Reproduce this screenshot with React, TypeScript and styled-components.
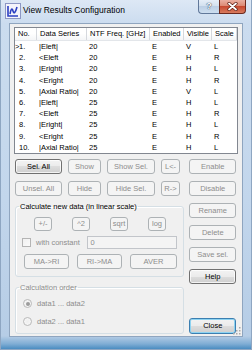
import React from "react";
import styled, { createGlobalStyle, css } from "styled-components";

const GlobalStyle = createGlobalStyle`
  html, body { margin: 0; padding: 0; background: #ffffff; }
  body { font-family: "Liberation Sans", Arial, sans-serif; }
  * { box-sizing: border-box; }
`;

const FONT = `"Liberation Sans", Arial, sans-serif`;

const Window = styled.div`
  width: 252px;
  height: 350px;
  display: flex;
  flex-direction: column;
  padding: 0 8px 12px 8px;
  border: 1px solid #8ea6c2;
  border-top: none;
  background: linear-gradient(
    180deg,
    #dde8f5 0px,
    #cbdcef 24px,
    #c2d6ec 200px,
    #b6cde6 336px,
    #7fadd4 344px,
    #3f86bd 350px
  );
  overflow: hidden;
`;

const TitleBar = styled.div`
  height: 24px;
  margin: 0 -8px;
  padding: 0 5px 0 4px;
  display: flex;
  align-items: flex-start;
`;

const AppIcon = styled.svg`
  width: 16px;
  height: 16px;
  margin-top: 3px;
  flex: none;
`;

const Title = styled.span`
  margin: 4px 0 0 2px;
  font: 8.5px/12px ${FONT};
  color: #000;
`;

const CaptionButtons = styled.div`
  margin-left: auto;
  display: flex;
`;

const HelpCap = styled.div`
  width: 21px;
  height: 14px;
  display: flex;
  align-items: center;
  justify-content: center;
  border: 1px solid #61789a;
  border-top: none;
  border-right: none;
  border-radius: 0 0 0 4px;
  background: linear-gradient(180deg, #e6eef8 0%, #d3e0ef 45%, #bccfe5 50%, #cddef0 100%);
  font: bold 9px/1 ${FONT};
  color: #fff;
  text-shadow: 0 0 1px #2b3d55, 0 0 1px #2b3d55;
`;

const CloseCap = styled.div`
  width: 27px;
  height: 14px;
  display: flex;
  align-items: center;
  justify-content: center;
  border: 1px solid #6d2a1f;
  border-top: none;
  border-radius: 0 0 4px 0;
  background: linear-gradient(180deg, #eab0a2 0%, #dc8a74 45%, #c84a31 50%, #d87b5e 100%);
`;

const Client = styled.div`
  flex: 1;
  position: relative;
  display: flex;
  flex-direction: column;
  background: #f0f0f0;
  border: 1px solid #8fa5bf;
  padding: 3px 4px 2px 4px;
  font: 7.5px/1 ${FONT};
`;

const COLS = "22px 50px 63px 34px 28px 1fr";

const ListView = styled.div`
  border: 1px solid #828790;
  background: #ffffff;
  height: 127px;
  overflow: hidden;
`;

const HeaderRow = styled.div`
  display: grid;
  grid-template-columns: ${COLS};
  height: 13px;
  background: linear-gradient(180deg, #ffffff 0%, #ffffff 45%, #f4f5f7 100%);
  border-bottom: 1px solid #e3e6ea;
`;

const HeaderCell = styled.div`
  padding-left: 3px;
  border-right: 1px solid #d5d8dd;
  line-height: 12px;
  color: #000;
  white-space: nowrap;
  overflow: hidden;
`;

const DataRow = styled.div`
  display: grid;
  grid-template-columns: ${COLS};
  height: 11.2px;
  line-height: 11.2px;
  color: #000;
`;

const DataCell = styled.div`
  padding-left: 2px;
  white-space: nowrap;
  overflow: hidden;
`;

const NoCell = styled.div`
  white-space: nowrap;
`;

const Marker = styled.span`
  display: inline-block;
  width: 4px;
`;

const Bottom = styled.div`
  flex: 1;
  display: flex;
  gap: 5px;
  margin-top: 5px;
  padding: 0 2px 0 1px;
`;

const LeftPane = styled.div`
  width: 171px;
  display: flex;
  flex-direction: column;
`;

const RightPane = styled.div`
  width: 47px;
  display: flex;
  flex-direction: column;
  gap: 7px;
`;

const ButtonGrid = styled.div`
  display: grid;
  grid-template-columns: 47px 33px 48px 19px;
  grid-auto-rows: 15px;
  column-gap: 6px;
  row-gap: 7px;
`;

const Btn = styled.button<{ $w?: number; $h?: number; $focus?: boolean }>`
  width: ${(p) => (p.$w ? `${p.$w}px` : "100%")};
  height: ${(p) => p.$h ?? 15}px;
  flex: none;
  padding: 0;
  margin: 0;
  font: 7.5px/1 ${FONT};
  color: #000;
  border: 1px solid #707070;
  border-radius: 3px;
  background: linear-gradient(180deg, #f3f3f3 0%, #ebebeb 50%, #dddddd 50%, #cfcfcf 100%);
  box-shadow: inset 0 0 0 1px rgba(255, 255, 255, 0.75);
  ${(p) =>
    p.$focus &&
    css`
      border-color: #3c7fb1;
      box-shadow: inset 0 0 0 1px #8ed3f1;
    `}
  &:disabled {
    color: #8d8d8d;
    border-color: #adb2b5;
    background: #f4f4f4;
    box-shadow: none;
  }
`;

// default button, pushed to the bottom of the right column
const CloseBtn = styled(Btn)`
  margin-top: auto;
`;

const GroupBox = styled.fieldset`
  margin: 6px 0 0 0;
  padding: 0 0 7px 0;
  min-width: 0;
  border: 1px solid #d5dfe5;
  border-radius: 3px;
  box-shadow: inset 1px 1px 0 #ffffff;
`;

const Legend = styled.legend<{ $disabled?: boolean }>`
  margin-left: 3px;
  padding: 0 1px;
  font: 7.5px/9px ${FONT};
  color: ${(p) => (p.$disabled ? "#8d8d8d" : "#000")};
`;

const OpRow = styled.div`
  display: flex;
  gap: 20px;
  margin: 6px 0 0 18px;
`;

const ConstRow = styled.div`
  display: flex;
  align-items: center;
  height: 13px;
  margin: 5px 6px 0 6px;
`;

const CheckBox = styled.span`
  width: 9px;
  height: 9px;
  border: 1px solid #b4b4b4;
  background: linear-gradient(135deg, #f0f0f0, #fafafa);
`;

const Label = styled.span<{ $disabled?: boolean }>`
  margin-left: 5px;
  color: ${(p) => (p.$disabled ? "#8d8d8d" : "#000")};
  white-space: nowrap;
`;

const TextBox = styled.input`
  margin-left: auto;
  width: 90px;
  height: 13px;
  padding: 0 0 0 2px;
  border: 1px solid #c2c5ca;
  background: #f4f4f4;
  font: 7.5px/11px ${FONT};
  color: #8d8d8d;
`;

const ConvRow = styled.div`
  display: flex;
  gap: 8px;
  margin: 5px 0 0 8px;
`;

const RadioRow = styled.div<{ $gap: number }>`
  display: flex;
  align-items: center;
  height: 9px;
  margin: ${(p) => p.$gap}px 0 0 7px;
`;

const Radio = styled.span<{ $checked?: boolean }>`
  width: 9px;
  height: 9px;
  border-radius: 50%;
  border: 1px solid #b9b9b9;
  background: radial-gradient(circle, #eeeeee 0%, #f8f8f8 100%);
  display: flex;
  align-items: center;
  justify-content: center;
  &::after {
    content: "";
    width: 4px;
    height: 4px;
    border-radius: 50%;
    background: ${(p) => (p.$checked ? "#9c9c9c" : "transparent")};
  }
`;

const SizeGrip = styled.svg`
  position: absolute;
  right: 1px;
  bottom: 1px;
  width: 9px;
  height: 9px;
`;

type Row = [string, string, string, string, string];

const rows: Row[] = [
  ["|Eleft|", "20", "E", "V", "L"],
  ["<Eleft", "20", "E", "H", "R"],
  ["|Eright|", "20", "E", "H", "L"],
  ["<Eright", "20", "E", "H", "R"],
  ["|Axial Ratio|", "20", "E", "V", "L"],
  ["|Eleft|", "25", "E", "H", "L"],
  ["<Eleft", "25", "E", "H", "R"],
  ["|Eright|", "25", "E", "H", "L"],
  ["<Eright", "25", "E", "H", "R"],
  ["|Axial Ratio|", "25", "E", "H", "L"],
];

const headers = ["No.", "Data Series", "NTF Freq. [GHz]", "Enabled", "Visible", "Scale"];

export default function App() {
  return (
    <>
      <GlobalStyle />
      <Window>
        <TitleBar>
          <AppIcon viewBox="0 0 16 16">
            <rect x="0.5" y="0.5" width="15" height="15" fill="#f4f4fb" stroke="#8d97c4" />
            <path d="M3 3 V13 H13" fill="none" stroke="#2b3fc2" strokeWidth="1.6" />
            <path d="M5 11 Q6.5 3 8 8 T12 4" fill="none" stroke="#2b3fc2" strokeWidth="1.6" />
          </AppIcon>
          <Title>View Results Configuration</Title>
          <CaptionButtons>
            <HelpCap>?</HelpCap>
            <CloseCap>
              <svg width="11" height="9" viewBox="0 0 11 9">
                <path d="M2 1.5 L9 7.5 M9 1.5 L2 7.5" stroke="#5a1a10" strokeWidth="3.2" strokeLinecap="round" />
                <path d="M2 1.5 L9 7.5 M9 1.5 L2 7.5" stroke="#ffffff" strokeWidth="1.8" strokeLinecap="round" />
              </svg>
            </CloseCap>
          </CaptionButtons>
        </TitleBar>

        <Client>
          <ListView>
            <HeaderRow>
              {headers.map((h) => (
                <HeaderCell key={h}>{h}</HeaderCell>
              ))}
            </HeaderRow>
            {rows.map((r, i) => (
              <DataRow key={i}>
                <NoCell>
                  <Marker>{i === 0 ? ">" : ""}</Marker>
                  {i + 1}.
                </NoCell>
                {r.map((c, j) => (
                  <DataCell key={j}>{c}</DataCell>
                ))}
              </DataRow>
            ))}
          </ListView>

          <Bottom>
            <LeftPane>
              <ButtonGrid>
                <Btn>Sel. All</Btn>
                <Btn disabled>Show</Btn>
                <Btn disabled>Show Sel.</Btn>
                <Btn disabled>L&lt;-</Btn>
                <Btn disabled>Unsel. All</Btn>
                <Btn disabled>Hide</Btn>
                <Btn disabled>Hide Sel.</Btn>
                <Btn disabled>R-&gt;</Btn>
              </ButtonGrid>

              <GroupBox>
                <Legend>Calculate new data (in linear scale)</Legend>
                <OpRow>
                  <Btn disabled $w={18} $h={14}>+/-</Btn>
                  <Btn disabled $w={18} $h={14}>^2</Btn>
                  <Btn disabled $w={18} $h={14}>sqrt</Btn>
                  <Btn disabled $w={18} $h={14}>log</Btn>
                </OpRow>
                <ConstRow>
                  <CheckBox />
                  <Label $disabled>with constant</Label>
                  <TextBox disabled value="0" readOnly />
                </ConstRow>
                <ConvRow>
                  <Btn disabled $w={45}>MA-&gt;RI</Btn>
                  <Btn disabled $w={45}>RI-&gt;MA</Btn>
                  <Btn disabled $w={47}>AVER</Btn>
                </ConvRow>
              </GroupBox>

              <GroupBox>
                <Legend $disabled>Calculation order</Legend>
                <RadioRow $gap={7}>
                  <Radio $checked />
                  <Label $disabled>data1 ... data2</Label>
                </RadioRow>
                <RadioRow $gap={9}>
                  <Radio />
                  <Label $disabled>data2 ... data1</Label>
                </RadioRow>
              </GroupBox>
            </LeftPane>

            <RightPane>
              <Btn disabled>Enable</Btn>
              <Btn disabled>Disable</Btn>
              <Btn disabled>Rename</Btn>
              <Btn disabled>Delete</Btn>
              <Btn disabled>Save sel.</Btn>
              <Btn>Help</Btn>
              <CloseBtn $focus $h={16}>Close</CloseBtn>
            </RightPane>
          </Bottom>

          <SizeGrip viewBox="0 0 9 9">
            {[
              [7, 1],
              [7, 4],
              [4, 4],
              [7, 7],
              [4, 7],
              [1, 7],
            ].map(([x, y], k) => (
              <rect key={k} x={x} y={y} width="1.5" height="1.5" fill="#a8a8a8" />
            ))}
          </SizeGrip>
        </Client>
      </Window>
    </>
  );
}
